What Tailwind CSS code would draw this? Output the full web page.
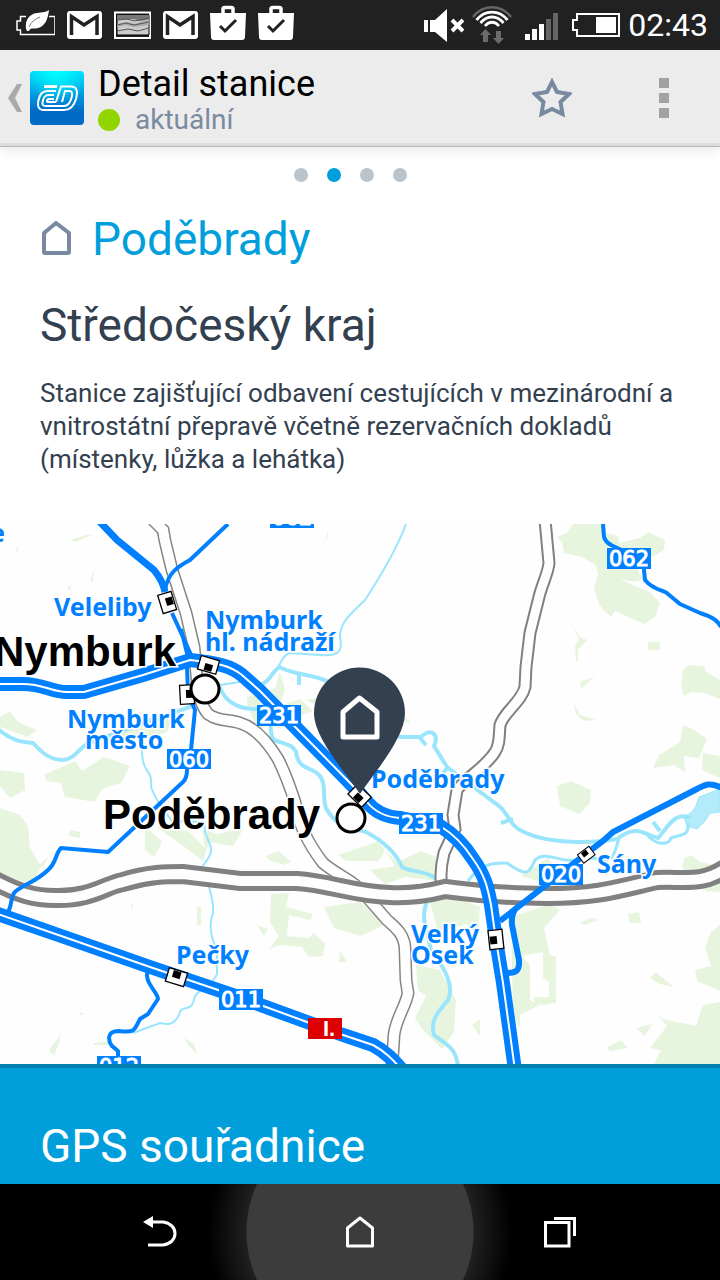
<!DOCTYPE html>
<html lang="cs">
<head>
    <meta charset="UTF-8">
    <meta name="viewport" content="width=device-width, initial-scale=1.0">
    <title>Detail stanice</title>
    <script src="https://cdn.jsdelivr.net/npm/@tailwindcss/browser@4"></script>
</head>
<body class="flex min-h-screen flex-col bg-white font-['Roboto',sans-serif] text-[#33404f]">
    <!-- Status bar -->
    <div class="flex h-[50px] items-center justify-between bg-[#212121] pr-3 pl-4 text-white">
        <div class="flex items-center gap-3">
            <svg class="h-[50px] w-[39px]" viewBox="16 0 39 50" fill="none">
                <path d="M26 16.500H20.500V21H17V30H20.500V34.500H55V16.500H49" stroke="#fff" stroke-width="1.500"/>
                <path d="M26 29C25 20 29 14 37 13C43 12.500 46 12 49 10C48 19 45 28 35 28.500C32 28.500 30 28 29 31H27Z" fill="#fff"/>
                <path d="M29 27C31 22 35 19 40 17" stroke="#777"/>
            </svg>
            <svg class="h-[50px] w-[35px]" viewBox="67 0 35 50" fill="none">
                <rect x="67" y="11" width="35" height="28" rx="3" fill="#fff"/>
                <path d="M71.500 35V16.500L84 25L97 16.500V35" stroke="#212121" stroke-width="3.500"/>
            </svg>
            <svg class="h-[50px] w-[37px]" viewBox="114 0 37 50" fill="none">
                <path d="M115 12.500H150V38H115Z" stroke="#fff" stroke-width="2"/>
                <path d="M117 15H149V35H117Z" fill="#ccc" stroke="#000"/>
                <path d="M117 15H149V19L141 21L133 19L117 20Z" fill="#777"/>
                <path d="M117 24L127 22L135 24L149 19V25L134 27L126 25L117 27Z" fill="#aaa"/>
                <path d="M117 20L127 19L135 21L149 18M117 25L126 23L134 25L149 22M117 31L128 29L138 31L149 28" stroke="#555"/>
            </svg>
            <svg class="h-[50px] w-[35px]" viewBox="67 0 35 50" fill="none">
                <rect x="67" y="11" width="35" height="28" rx="3" fill="#fff"/>
                <path d="M71.500 35V16.500L84 25L97 16.500V35" stroke="#212121" stroke-width="3.500"/>
            </svg>
            <svg class="h-[50px] w-[36px]" viewBox="210 0 36 50" fill="none">
                <path d="M223 13V9Q223 7.500 225 7.500H231Q233 7.500 233 9V13" stroke="#fff" stroke-width="3.500"/>
                <path d="M210 13H246L245 37Q245 40 242 40H214Q211 40 211 37Z" fill="#fff"/>
                <path d="M220 26L225 31L236 20" stroke="#212121" stroke-width="3"/>
            </svg>
            <svg class="h-[50px] w-[36px]" viewBox="210 0 36 50" fill="none">
                <path d="M223 13V9Q223 7.500 225 7.500H231Q233 7.500 233 9V13" stroke="#fff" stroke-width="3.500"/>
                <path d="M210 13H246L245 37Q245 40 242 40H214Q211 40 211 37Z" fill="#fff"/>
                <path d="M220 26L225 31L236 20" stroke="#212121" stroke-width="3"/>
            </svg>
        </div>
        <div class="flex items-center gap-2">
            <svg class="h-[50px] w-[40px]" viewBox="423 0 40 50" fill="none">
                <path d="M423 20H427V32H423ZM429 20H434L446 9V42L434 32H429Z" fill="#fff"/>
                <path d="M451 20L462 31M462 20L451 31" stroke="#fff" stroke-width="4"/>
            </svg>
            <svg class="h-[50px] w-[40px]" viewBox="471 0 40 50" fill="none">
                <path d="M472 17C482 4 500 4 510 17" stroke="#666" stroke-width="2.400"/>
                <path d="M475.500 20C484 9.500 498 9.500 506.500 20M479.500 23C486 15 496 15 502.500 23M484 26C488 21 494 21 498 26" stroke="#fff" stroke-width="2.800"/>
                <path d="M484.500 29L490 35H487V42H482V35H479ZM497.500 44L492 38H495V31H500V38H503Z" fill="#6b6b6b"/>
            </svg>
            <svg class="h-[50px] w-[44px]" viewBox="519 0 44 50">
                <path d="M524 34H529V40H524ZM531 29H536V40H531ZM538 24H543V40H538Z" fill="#fff"/>
                <path d="M545 19H550V40H545ZM552 13H557V40H552Z" fill="#666"/>
            </svg>
            <svg class="h-[50px] w-[48px]" viewBox="571 0 48 50" fill="none">
                <path d="M576 14H618V36H576V30H572V20H576Z" stroke="#fff" stroke-width="2"/>
                <path d="M595 17H615V33H595Z" fill="#fff"/>
            </svg>
            <span class="text-[32px] leading-[50px]">02:43</span>
        </div>
    </div>

    <!-- Action bar -->
    <header class="relative z-10 flex h-[97px] items-center justify-between border-b border-[#b4b6b6] bg-[#ececec] shadow-[inset_0_-3px_0_#dddddd,0_4px_12px_rgba(0,0,0,0.09)]">
        <div class="flex items-center">
            <button class="flex items-center gap-2 pl-2" aria-label="Zpět">
                <svg class="h-[54px] w-[14px]" viewBox="8 71 14 54"><path d="M17 84H22L15 98L22 112H17L8 98Z" fill="#aaa"/></svg>
                <svg class="size-[54px]" viewBox="0 0 54 54" fill="none">
                    <defs>
                        <linearGradient id="logo-base" x2="0" y2="1">
                            <stop offset="0" stop-color="#00d8fa"/>
                            <stop offset=".45" stop-color="#0097de"/>
                            <stop offset=".75" stop-color="#006bc7"/>
                        </linearGradient>
                        <radialGradient id="logo-light" cx=".5" cy="0" r=".6">
                            <stop offset="0" stop-color="#00ffff"/>
                            <stop offset="1" stop-color="#00ffff" stop-opacity="0"/>
                        </radialGradient>
                    </defs>
                    <rect width="54" height="54" rx="4" fill="url(#logo-base)"/>
                    <rect width="54" height="54" rx="4" fill="url(#logo-light)"/>
                    <g stroke="#fff" stroke-width="2">
                        <path d="M26 20H18C12 20 10 23 8.500 29C7 36 9 39 14 39H34C41 39 44 35 46 28C48 20 47 15.500 41 15.500H31L26 31"/>
                        <path d="M24 24H19C15 24 14 26 13 29C12 33 12 35 16 35H34C38 35 40 32 41.500 27C43 22 42 20 39 20H35L32 31"/>
                        <path d="M24 28H19C17 28 16 31 18 31H26"/>
                    </g>
                    <path d="M14 15.500H27" stroke="#fff" stroke-width="3"/>
                </svg>
            </button>
            <div class="pt-1 pl-[14px]">
                <h1 class="text-[36px] leading-[40px] text-black">Detail stanice</h1>
                <p class="flex items-center gap-[15px] text-[28px] leading-[32px] text-[#7b8b9f]">
                    <span class="size-[22px] rounded-full bg-[#91d400]"></span>aktuální
                </p>
            </div>
        </div>
        <div class="flex items-center">
            <button class="px-9" aria-label="Přidat do oblíbených">
                <svg class="size-[40px]" viewBox="0 0 40 40"><path d="M20 4L25 14L37 16L28.500 24L30.500 36L20 31L9.500 36L11.500 24L3 16L15 14Z" fill="none" stroke="#7889a0" stroke-width="4"/></svg>
            </button>
            <button class="flex flex-col gap-[5px] px-[51px]" aria-label="Další možnosti">
                <span class="size-[10px] bg-[#a2a2a2]"></span>
                <span class="size-[10px] bg-[#a2a2a2]"></span>
                <span class="size-[10px] bg-[#a2a2a2]"></span>
            </button>
        </div>
    </header>

    <main class="flex flex-1 flex-col">
        <!-- Pager -->
        <div class="flex justify-center pt-[21px]">
            <button class="mr-[19px] size-[14px] rounded-full bg-[#bac4cd]" aria-label="Strana 1"></button>
            <button class="mr-[19px] size-[14px] rounded-full bg-[#009fdb]" aria-label="Strana 2" aria-current="page"></button>
            <button class="mr-[19px] size-[14px] rounded-full bg-[#bac4cd]" aria-label="Strana 3"></button>
            <button class="mr-[19px] size-[14px] rounded-full bg-[#bac4cd]" aria-label="Strana 4"></button>
        </div>

        <!-- Station -->
        <section class="px-10 pt-[30px] pb-12">
            <h2 class="flex items-center gap-5 text-[46px] leading-[54px] text-[#009fdb]">
                <svg class="h-[36px] w-[32px]" viewBox="0 0 32 36" fill="none"><path d="M4 12L16 2L29 12V31Q29 32 28 32H5Q4 32 4 31Z" stroke="#7889a0" stroke-width="4" stroke-linejoin="round"/></svg>
                Poděbrady
            </h2>
            <h3 class="pt-8 text-[46px] leading-[54px]">Středočeský kraj</h3>
            <p class="pt-[25px] text-[26px] leading-[33px]">Stanice zajišťující odbavení cestujících v mezinárodní a vnitrostátní přepravě včetně rezervačních dokladů (místenky, lůžka a lehátka)</p>
        </section>

        <!-- Map -->
        <svg class="block w-full" viewBox="0 524 720 540" fill="none" role="img" aria-label="Mapa okolí stanice Poděbrady">
            <defs>
                <g id="station">
                    <rect x="-7" y="-9" width="14" height="19" fill="#fff" stroke="#000" stroke-width="1.300"/>
                    <path d="M-1 -4H6V4H-1Z" fill="#000"/>
                </g>
                <path id="road-west" d="M153 520L163 530L165 541L172 570L186 613L194 647L197 680C198 695 201 706 208 714C219 722 229 719 240 723C257 728 270 746 278 759C287 777 291 790 295 802C298 825 310 846 323 863C340 877 355 881 367 897L387 920C396 928 404 934 405 948L406 980L408 993C406 1006 396 1018 394 1035L392 1066"/>
                <path id="road-east" d="M545 520L549 563C548 574 542 584 539 597L530 633L526 667L525 687C522 701 504 712 500 725C499 735 500 745 495 752C485 768 465 778 457 790L453 815L455 829L444 853C441 865 440 877 442 889"/>
                <path id="motorway" d="M-5 881C20 894 35 898 55 898C92 899 105 885 123 882C148 874 168 874 183 874L240 881L297 881C330 883 352 894 390 895C411 896 426 894 445 889C470 892 490 895 547 896C600 896 621 888 657 880C688 879 702 884 725 869"/>
                <path id="rail-nymburk" d="M-5 684H20C43 683 50 692 67 692H84L143 675L190 660C218 663 231 666 242 675L260 691L307 739L355 788L367 802C375 812 385 817 400 818L440 826C455 835 466 848 473 859C486 877 488 890 491 905L496 940L503 983L515 1070"/>
                <path id="rail-pecky" d="M-5 913L67 938L150 967L233 995L307 1022L343 1035L373 1045C386 1052 393 1060 402 1070"/>
            </defs>
            <rect y="524" width="720" height="540" fill="#fefefe"/>

            <!-- Forests -->
            <g fill="#e7f5df">
                <path d="M557 537L567 533L573 524H602V532L618 536L619 543L640 538L648 532L665 540L664 550L652 557L641 559L638 572L645 579L635 582L620 579L635 586L650 592L660 603L655 617L644 624L615 611L611 617L600 606L594 589L598 575L596 565L582 557L564 553L562 542Z"/>
                <path d="M572 625L580 637L587 640L578 650V661L576 662L575 646L579 639ZM580 682L595 676L586 684L581 689ZM573 702L580 715L596 720L584 721L576 714ZM648 642L660 642V650H648ZM683 670L688 665L704 666L706 672L720 680V699L704 693L691 692L684 696L681 686ZM683 725L694 730L707 739L699 758L684 756L685 772L674 765L653 768L659 755L680 742ZM703 753L720 756V778L702 770ZM557 786L571 781L591 790L590 803L579 814L560 806Z"/>
                <path d="M0 808L20 815L28 826L30 848L41 866L33 885L0 874ZM38 866L48 857L43 868ZM70 830L80 832V838L69 836Z"/>
                <path d="M0 717L10 711L18 722L37 730L28 737L0 727ZM44 775L75 761L82 771L104 757L130 766L121 783L102 789L95 802L65 797L61 783L47 781ZM0 770L24 773L25 790L10 798L0 786ZM105 738L135 725L155 714L181 716L165 733L138 738ZM70 540L86 535L92 535L75 542ZM93 582L94 571L90 580ZM67 588L71 584L70 591ZM15 549L18 547L17 552Z"/>
                <path d="M247 697L275 688L280 672L285 690L279 706L300 699L313 711L289 719L269 718L259 734L247 704ZM306 700L318 698L314 704ZM324 543L328 531L328 536ZM345 618L350 610L346 618ZM405 717L412 723L404 722Z"/>
                <path d="M145 825L162 842L154 857L145 850ZM157 827L188 831L205 848L202 830L218 834L244 828L233 846L209 842L203 861L186 848ZM266 856L279 851L291 862L284 865L269 860ZM338 855L371 844L378 841L385 850L379 861L346 861ZM370 870L395 866L385 851L398 862L421 851L436 857L437 881L405 877L385 884Z"/>
                <path d="M324 907L360 902L374 912L389 921L378 928L360 936L334 928ZM271 894L289 893L286 907L313 914L310 920L289 915L287 936L308 938L314 933L325 944L323 956L309 957L302 947L280 945L269 949L279 936L270 922ZM257 925L268 929L264 936ZM340 951L347 962H339ZM306 1015L317 1019L311 1020Z"/>
                <path d="M430 902L452 895L480 907L478 937L467 924L438 932ZM416 965L440 970L456 1000L454 1032L442 1049L423 1030L415 1018L426 996L418 990ZM472 1025L480 1019V1036Z"/>
                <path d="M511 917L551 904L560 910L544 928L550 955L556 957V1003L542 1005L534 1003V997H549V982L543 978V952L522 956L530 965V1000L539 1005L520 1015V1028L513 1016ZM580 922L592 918L598 920L584 925ZM628 914L639 912L641 923L630 923ZM684 859L691 855L700 862L720 866V892L705 891L702 880L682 868Z"/>
                <path d="M711 932L720 925V1064H654L661 1050L650 1048L667 1026L655 1011L663 1019L696 1026L703 1005L720 1002V991L697 981L695 970L711 966L705 947ZM636 1028L652 1024L645 1036ZM606 1048L621 1040L628 1048L611 1051ZM640 962L645 967ZM650 978L655 972L674 987L660 984ZM548 858L562 877L550 885L521 876Z"/>
                <path d="M49 1050L59 1037L60 1027L60 1040L54 1056ZM184 1038L194 1044L197 1055L188 1045ZM94 1043L108 1041V1045H94ZM131 905L133 910V904ZM197 907H201V925H197ZM80 1012L85 1014L80 1015Z"/>
            </g>

            <!-- Rivers -->
            <path d="M696 806L699 797L720 789V812L710 813L705 821L697 829L687 826L684 817L692 812Z" fill="#b3ebfb" stroke="#99e5fc"/>
            <g stroke="#99e5fc" stroke-width="4">
                <path d="M-3 728C12 742 24 742 33 743C43 754 51 760 63 760C78 758 78 746 92 742L133 727L190 707L220 688C225 700 235 710 259 709C276 713 267 733 274 740C288 745 293 745 296 752C298 770 312 767 319 775C327 783 322 799 326 808C337 829 355 829 366 832C385 842 397 855 402 867C412 873 429 870 440 882"/>
                <path d="M257 686C271 682 271 673 279 667C300 677 307 672 329 682L400 737H421C432 727 439 735 434 746L447 767L495 803C508 810 508 825 522 831C548 845 595 843 617 839C637 824 643 834 658 838C668 827 675 811 690 818M433 891C421 907 423 921 428 936L431 951C447 970 454 988 448 1000C437 1013 430 1021 434 1035C450 1046 456 1050 458 1066M299 674V685M420 738L426 745M448 767L443 773M501 823L513 819M653 822L660 831"/>
                <path d="M645 832C656 848 670 844 671 838C683 834 689 836 688 823" stroke-width="3"/>
                <path d="M468 881C482 862 496 863 507 863C528 878 529 873 535 860C545 850 560 863 577 860L594 858C616 867 615 847 619 839" stroke-width="3"/>
            </g>
            <g stroke="#99e5fc" stroke-width="2">
                <path d="M406 524C399 543 384 571 365 600C350 615 340 622 340 637C344 655 334 656 320 655L290 653C282 655 281 664 277 669"/>
                <path d="M142 750C142 775 153 768 151 787C156 800 160 806 172 821L204 822C205 849 221 843 202 867C208 882 214 900 213 913C208 926 212 940 217 950V974C211 989 195 989 194 1000C190 1014 181 1003 179 1015C174 1025 168 1025 160 1023L133 1033"/>
                <path d="M220 685L240 682"/>
            </g>

            <!-- Roads -->
            <use href="#road-west" stroke="#858585" stroke-width="13"/>
            <use href="#road-west" stroke="#fefefe" stroke-width="10"/>
            <use href="#road-east" stroke="#808080" stroke-width="13"/>
            <use href="#road-east" stroke="#fefefe" stroke-width="9"/>
            <use href="#motorway" stroke="#808080" stroke-width="20"/>
            <use href="#motorway" stroke="#fefefe" stroke-width="10"/>

            <!-- Railways -->
            <g stroke="#0080ff" stroke-width="4" stroke-linejoin="round">
                <path d="M228 524L190 560C177 567 168 573 165 590M172 613L192 657M181 629L188 657"/>
                <path d="M187 667L188 693L195 710L191 750L187 770Q187 778 183 782L108 852L61 848C55 854 57 862 48 870C36 882 20 886 14 893C10 900 12 908 7 913"/>
                <path d="M603 524L604 537Q606 543 613 546L643 560L645 580C654 591 665 590 668 594L680 604L700 613Q717 618 721 627"/>
                <path d="M148 970C143 982 158 992 158 999L148 1014L140 1019C134 1030 136 1033 119 1031C105 1031 109 1042 112 1046L118 1051V1066"/>
            </g>
            <path d="M100 522L117 540L154 570Q163 581 165 592" stroke="#0080ff" stroke-width="7"/>
            <path d="M722 788C710 782 706 784 695 790L613 832L603 841L587 853L500 921M516 908Q511 914 512 925L519 960C520 972 515 973 505 973" stroke="#0080ff" stroke-width="6"/>
            <use href="#rail-nymburk" stroke="#0080ff" stroke-width="14"/>
            <use href="#rail-nymburk" stroke="#fff" stroke-width="2"/>
            <use href="#rail-pecky" stroke="#0080ff" stroke-width="14"/>
            <use href="#rail-pecky" stroke="#fff" stroke-width="2"/>

            <!-- Stations -->
            <use href="#station" transform="translate(167 602) rotate(-17)"/>
            <use href="#station" transform="translate(209 665) rotate(106)"/>
            <use href="#station" transform="translate(187 694) rotate(-3)"/>
            <use href="#station" transform="translate(360 796) rotate(134)"/>
            <use href="#station" transform="translate(586 855) rotate(233) scale(.75)"/>
            <use href="#station" transform="translate(496 940) rotate(174)"/>
            <use href="#station" transform="translate(176 977) rotate(-73)"/>
            <circle cx="205" cy="689" r="14" fill="#fff" stroke="#000" stroke-width="3"/>
            <circle cx="351" cy="818" r="14" fill="#fff" stroke="#000" stroke-width="3"/>

            <!-- Route numbers -->
            <g fill="#0080ff">
                <path d="M270 507H314V528H270ZM607 548H651V569H607ZM257 705H301V726H257ZM167 749H211V769H167ZM399 813H443V834H399ZM539 864H583V885H539ZM219 989H263V1010H219ZM97 1056H141V1077H97Z"/>
            </g>
            <path d="M308 1018H342V1039H308Z" fill="#dc0000"/>
            <g fill="#fff" stroke="#fff" text-anchor="middle" class="font-['DejaVu_Sans',sans-serif] text-[21px]">
                <text x="292" y="525">062</text>
                <text x="629" y="566">062</text>
                <text x="279" y="723">231</text>
                <text x="189" y="767">060</text>
                <text x="421" y="831">231</text>
                <text x="561" y="882">020</text>
                <text x="241" y="1007">011</text>
                <text x="119" y="1074">012</text>
            </g>
            <text x="329" y="1036" fill="#fff" text-anchor="middle" class="font-['Liberation_Sans',sans-serif] text-[22px] font-bold">I.</text>

            <!-- Place names -->
            <g fill="#0080ff" stroke="#fff" stroke-width="3" paint-order="stroke" class="font-['Noto_Sans',sans-serif] text-[25px] font-bold">
                <text x="-10" y="542">e</text>
                <text x="54" y="616">Veleliby</text>
                <text x="205" y="629">Nymburk</text>
                <text x="205" y="651">hl. nádraží</text>
                <text x="67" y="728">Nymburk</text>
                <text x="85" y="749">město</text>
                <text x="371" y="788">Poděbrady</text>
                <text x="597" y="873">Sány</text>
                <text x="411" y="943">Velký</text>
                <text x="411" y="964">Osek</text>
                <text x="176" y="964">Pečky</text>
            </g>
            <g fill="#000" stroke="#fff" stroke-width="3" paint-order="stroke" class="font-['Liberation_Sans',sans-serif] text-[42px] font-bold">
                <text x="176" y="666" text-anchor="end">Nymburk</text>
                <text x="103" y="829">Poděbrady</text>
            </g>

            <!-- Pin -->
            <path d="M360 794C346 773 314 738 314 713A45.500 45.500 0 0 1 405 713C405 738 374 773 360 794Z" fill="#33404f"/>
            <path d="M343 712L359.500 698L377 712V737H343Z" stroke="#fff" stroke-width="5" stroke-linejoin="round"/>
        </svg>

        <!-- GPS -->
        <section class="flex-1 border-t-4 border-[#007fb0] bg-[#009fdb] px-10 pt-[51px]">
            <h3 class="text-[46px] leading-[54px] text-white">GPS souřadnice</h3>
        </section>
    </main>

    <!-- Navigation bar -->
    <nav class="sticky bottom-0 flex h-24 justify-center overflow-hidden bg-black">
        <button class="flex w-[100px] items-center justify-center" aria-label="Zpět">
            <svg class="size-[36px]" viewBox="0 0 36 36" fill="none"><path d="M9 8H21C37 10 37 29 21 31H6" stroke="#fff" stroke-width="3"/><path d="M1 8L11 2V14Z" fill="#fff"/></svg>
        </button>
        <button class="flex w-[300px] items-center justify-center bg-[radial-gradient(circle_at_center,#3c3c3c_113px,#202020_114px,#000000_152px)]" aria-label="Domů">
            <svg class="h-[34px] w-[32px]" viewBox="0 0 32 34" fill="none"><path d="M3.500 13L16 3L28.500 13V31H3.500Z" stroke="#fff" stroke-width="3" stroke-linejoin="round"/></svg>
        </button>
        <button class="flex w-[100px] items-center justify-center" aria-label="Poslední aplikace">
            <svg class="size-[36px]" viewBox="0 0 36 36" fill="none"><path d="M3.500 8.500H27V32H3.500ZM12 4.500H32.500V22" stroke="#fff" stroke-width="3"/></svg>
        </button>
    </nav>
</body>
</html>
